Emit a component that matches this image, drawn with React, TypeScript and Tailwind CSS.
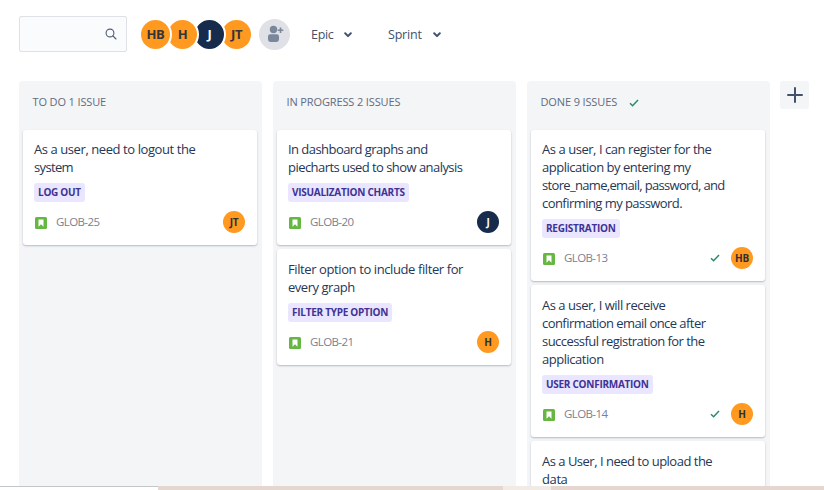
import React from "react";

type Issue = {
  lines: { text: string; tracking: string }[];
  tag?: string;
  id?: string;
  who?: string;
  done?: boolean;
};

const columns: { title: string; done?: boolean; issues: Issue[] }[] = [
  {
    title: "TO DO 1 ISSUE",
    issues: [
      {
        lines: [
          { text: "As a user, need to logout the", tracking: "tracking-[-0.42px]" },
          { text: "system", tracking: "tracking-[-0.65px]" },
        ],
        tag: "LOG OUT",
        id: "GLOB-25",
        who: "JT",
      },
    ],
  },
  {
    title: "IN PROGRESS 2 ISSUES",
    issues: [
      {
        lines: [
          { text: "In dashboard graphs and", tracking: "tracking-[-0.55px]" },
          { text: "piecharts used to show analysis", tracking: "tracking-[-0.55px]" },
        ],
        tag: "VISUALIZATION CHARTS",
        id: "GLOB-20",
        who: "J",
      },
      {
        lines: [
          { text: "Filter option to include filter for", tracking: "tracking-[-0.4px]" },
          { text: "every graph", tracking: "tracking-[-0.47px]" },
        ],
        tag: "FILTER TYPE OPTION",
        id: "GLOB-21",
        who: "H",
      },
    ],
  },
  {
    title: "DONE 9 ISSUES",
    done: true,
    issues: [
      {
        lines: [
          { text: "As a user, I can register for the", tracking: "tracking-[-0.45px]" },
          { text: "application by entering my", tracking: "tracking-[-0.47px]" },
          { text: "store_name,email, password, and", tracking: "tracking-[-0.67px]" },
          { text: "confirming my password.", tracking: "tracking-[-0.55px]" },
        ],
        tag: "REGISTRATION",
        id: "GLOB-13",
        who: "HB",
        done: true,
      },
      {
        lines: [
          { text: "As a user, I will receive", tracking: "tracking-[-0.48px]" },
          { text: "confirmation email once after", tracking: "tracking-[-0.55px]" },
          { text: "successful registration for the", tracking: "tracking-[-0.55px]" },
          { text: "application", tracking: "tracking-[-0.47px]" },
        ],
        tag: "USER CONFIRMATION",
        id: "GLOB-14",
        who: "H",
        done: true,
      },
      {
        lines: [
          { text: "As a User, I need to upload the", tracking: "tracking-[-0.5px]" },
          { text: "data", tracking: "tracking-[-0.4px]" },
        ],
      },
    ],
  },
];

function Check() {
  return (
    <svg width="10" height="8" viewBox="0 0 10 8" fill="none" stroke="#2b8a68" strokeWidth="1.5">
      <path d="M1 4.2 3.6 6.7 9 1" />
    </svg>
  );
}

function Chevron() {
  return (
    <svg width="8" height="6" viewBox="0 0 8 6" fill="none" stroke="#42526e" strokeWidth="2" strokeLinecap="round" strokeLinejoin="round">
      <path d="M1.2 1.3 4 4.1 6.8 1.3" />
    </svg>
  );
}

function StoryIcon() {
  return (
    <svg width="12" height="12" viewBox="0 0 12 12">
      <rect width="12" height="12" rx="1.5" fill="#65b741" />
      <path d="M3.500 2.500h5v7.200L6 7.300 3.500 9.700z" fill="#fff" />
    </svg>
  );
}

function Card({ issue }: { issue: Issue }) {
  const dark = issue.who === "J";
  return (
    <article className="shrink-0 rounded-[3px] bg-white pt-[11px] pr-[12px] pb-[11px] pl-[11px] shadow-[0_1px_2px_rgba(9,30,66,0.28)] first:pt-[10px]">
      <div className="text-[13px] leading-[18px] whitespace-nowrap text-[#243757]">
        {issue.lines.map((l) => (
          <p key={l.text} className={l.tracking}>
            {l.text}
          </p>
        ))}
      </div>
      {issue.tag && (
        <div className="mt-[7px] flex">
          <span className="h-[19px] rounded-[3px] bg-[#eae6ff] px-[4px] text-[10px] leading-[19px] font-bold tracking-[-0.27px] whitespace-nowrap text-[#403294]">
            {issue.tag}
          </span>
        </div>
      )}
      {issue.id && (
        <div className="mt-[8px] flex h-[24px] items-center">
          <span className="ml-px pt-px">
            <StoryIcon />
          </span>
          <span className="ml-[9px] text-[11.500px] tracking-[-0.6px] text-[#7a8194]">{issue.id}</span>
          <span className="mr-[11px] ml-auto">{issue.done && <Check />}</span>
          <span
            className={
              "flex size-[22px] items-center justify-center rounded-full text-[10px] font-bold tracking-[-0.2px] " +
              (dark ? "bg-[#172b4d] text-white" : "bg-[#ff991f] text-[#2e2e38]")
            }
          >
            {issue.who}
          </span>
        </div>
      )}
    </article>
  );
}

const people = [
  { name: "HB", style: "z-40 bg-[#ff991f] text-[#33343c]" },
  { name: "H", style: "z-30 bg-[#ff991f] text-[#33343c]" },
  { name: "J", style: "z-20 bg-[#172b4d] text-white" },
  { name: "JT", style: "z-10 bg-[#ff991f] text-[#33343c]" },
];

export default function App() {
  return (
    <div className="flex h-[490px] w-[824px] flex-col overflow-hidden bg-white font-['Open_Sans','Noto_Sans',sans-serif]">
      <header className="flex h-[81px] shrink-0 items-start pt-[16px] pl-[19px]">
        <div className="flex h-[36px] w-[108px] items-center justify-end rounded-[2px] border border-[#dfe1e6] bg-[#fafbfc] pr-[9px]">
          <svg width="12" height="12" viewBox="0 0 12 12" fill="none" stroke="#505f79" strokeWidth="1.1" strokeLinecap="round">
            <circle cx="5" cy="5" r="3.900" />
            <path d="m8 8 3 3" />
          </svg>
        </div>
        <div className="ml-[12px] flex pt-[2px]">
          {people.map((p) => (
            <span
              key={p.name}
              className={"relative mr-[-6px] flex size-[33px] items-center justify-center rounded-full border-2 border-white text-[13px] font-bold tracking-[-0.3px] " + p.style}
            >
              {p.name}
            </span>
          ))}
        </div>
        <div className="mt-[3px] ml-[12px] size-[31px] rounded-full bg-[#dfe1e6]">
          <svg width="31" height="31" viewBox="0 0 31 31" fill="#7a869a">
            <circle cx="14.500" cy="10.500" r="3.700" />
            <path d="M9 17.500a2.200 2.200 0 0 1 2.200-2.200h6.600a2.200 2.200 0 0 1 2.200 2.200v2.500a3 3 0 0 1-3 3h-5a3 3 0 0 1-3-3z" />
            <path d="M20.700 8.500h1.600v2h2v1.600h-2v2h-1.600v-2h-2v-1.600h2z" />
          </svg>
        </div>
        <div className="mt-[9px] ml-[21px] flex h-[20px] items-center text-[12.500px] font-medium text-[#42526e]">
          <span className="w-[33px] tracking-[-0.3px]">Epic</span>
          <Chevron />
          <span className="ml-[36px] w-[45px] tracking-[-0.2px]">Sprint</span>
          <Chevron />
        </div>
      </header>

      <main className="flex h-[405px] shrink-0 gap-[11px] overflow-hidden pl-[19px]">
        {columns.map((c) => (
          <section key={c.title} className="flex w-[243px] shrink-0 flex-col rounded-t-[4px] bg-[#f4f5f7] pr-[5px] pl-[4px]">
            <h2 className="flex h-[49px] shrink-0 items-center pb-[7px] pl-[9.500px] text-[11px] tracking-[-0.13px] whitespace-nowrap text-[#626b80]">
              {c.title}
              {c.done && (
                <span className="ml-[12px] pt-[2px]">
                  <Check />
                </span>
              )}
            </h2>
            <div className="flex flex-col gap-[4px]">
              {c.issues.map((i) => (
                <Card key={i.lines[0].text} issue={i} />
              ))}
            </div>
          </section>
        ))}
        <button className="ml-[-1px] flex h-[28px] w-[29px] items-center justify-center rounded-[3px] bg-[#f4f5f7]">
          <svg width="16" height="16" viewBox="0 0 16 16" stroke="#42526e" strokeWidth="2" strokeLinecap="round">
            <path d="M8 1v14M1 8h14" />
          </svg>
        </button>
      </main>

      <footer className="flex h-[4px] shrink-0 bg-[#e5d6cf]">
        <div className="w-[158px] border-t border-[#c3c6c9] bg-white" />
        <div className="ml-[345px] w-[48px] bg-[#f2ebe5]" />
      </footer>
    </div>
  );
}
